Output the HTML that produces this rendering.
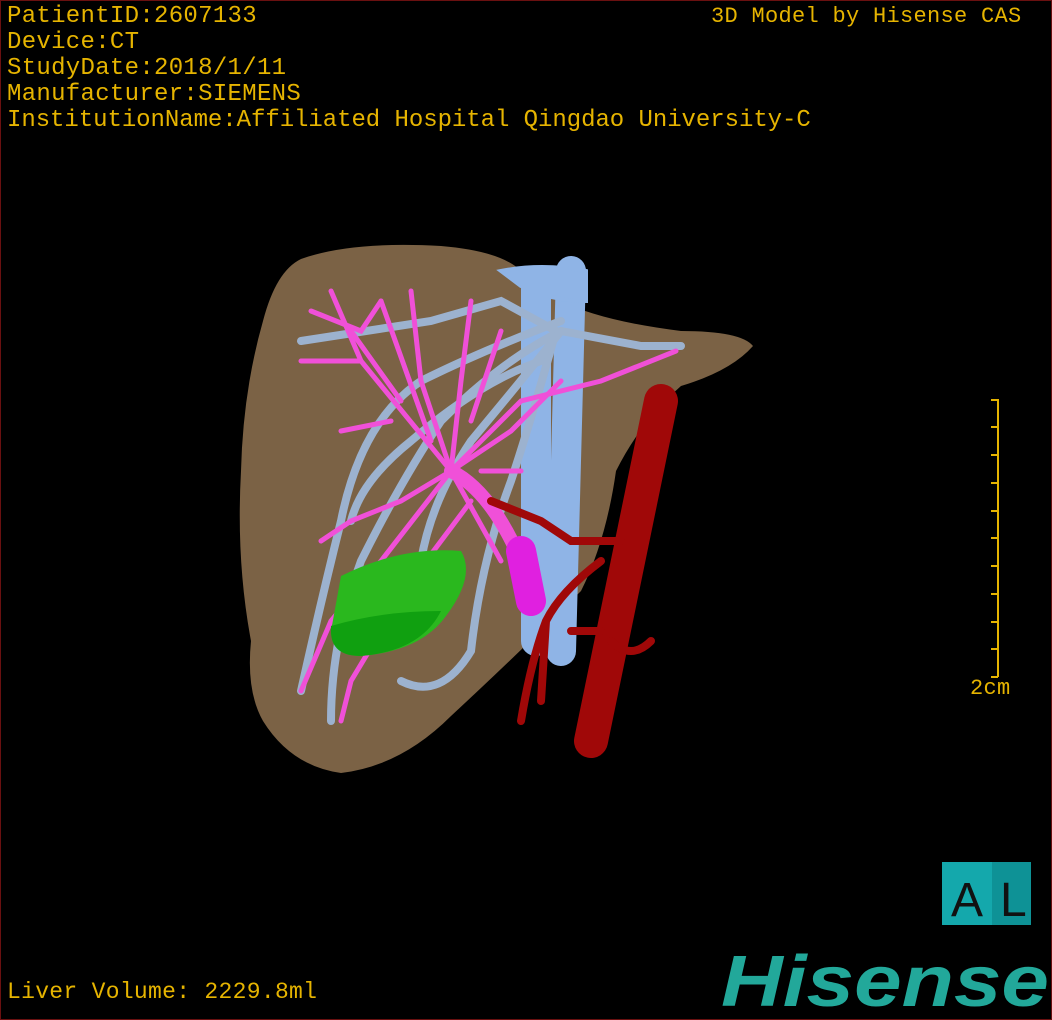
<!DOCTYPE html>
<html><head><meta charset="utf-8"><style>
html,body{margin:0;padding:0;background:#000}
#c{position:relative;width:1050px;height:1018px;border:1px solid #6a1010;overflow:hidden;background:#000}
.t{position:absolute;color:#e6b400;font-family:"Liberation Mono",monospace;font-size:24px;line-height:26px;white-space:pre;letter-spacing:0.3px}
svg{position:absolute;left:0;top:0}
</style></head><body><div id="c">
<svg width="1050" height="1018" viewBox="0 0 1050 1018">
<path d="M300 258 Q350 240 440 245 Q500 250 520 270 L560 300 Q600 320 680 330 Q740 330 752 345 Q730 370 680 385 Q640 420 615 470 Q605 540 580 590 Q520 650 450 715 Q400 765 340 772 Q290 765 262 720 Q245 690 250 640 Q235 560 240 470 Q242 390 262 320 Q275 270 300 258Z" fill="#7b6245"/>
<g fill="none" stroke-linecap="round">
<path d="M570 270 L560 650 M535 280 L535 640" stroke="#8fb4e6" stroke-width="30"/>
<path d="M500 270 Q540 262 585 270 L585 300 Q550 300 520 285Z" fill="#8fb4e6" stroke="#8fb4e6" stroke-width="4"/>
<g stroke="#9cb2cf" stroke-width="8">
<path d="M560 320 Q480 350 420 380 Q360 420 340 520 Q320 600 300 690"/>
<path d="M560 330 Q500 360 440 420 Q400 480 360 560 Q330 640 330 720"/>
<path d="M555 330 L500 300 L430 320 L300 340"/>
<path d="M555 330 Q530 420 510 480 Q480 560 470 650 Q440 700 400 680"/>
<path d="M560 330 L640 345 L680 345"/>
<path d="M560 330 Q520 380 470 440 Q430 500 420 560"/>
<path d="M540 360 Q480 380 410 440 Q360 480 350 520"/>
</g>
<g stroke="#f050d8" stroke-width="5">
<path d="M500 560 L450 470 L360 360 L330 290"/>
<path d="M450 470 L420 380 L410 290"/>
<path d="M450 470 L460 380 L470 300"/>
<path d="M450 470 L520 400 L600 380 L675 350"/>
<path d="M450 470 L400 500 L350 520 L320 540"/>
<path d="M450 470 L380 560 L330 620 L300 690"/>
<path d="M470 500 L410 580 L350 680 L340 720"/>
<path d="M360 360 L300 360 M390 420 L340 430 M380 300 L360 330 L310 310"/>
<path d="M450 470 L510 430 L540 400 L560 380"/>
<path d="M430 440 L380 300 M400 400 L350 330 M470 420 L500 330 M480 470 L520 470"/>
</g>
<path d="M450 470 Q490 490 520 560" stroke="#f050d8" stroke-width="14"/>
<path d="M520 550 L530 600" stroke="#e020e0" stroke-width="30"/>
<path d="M660 400 L590 740" stroke="#a00808" stroke-width="34"/>
<path d="M490 500 L540 520 L570 540 L620 540 M600 560 Q560 590 545 620 Q530 660 520 720 M545 620 L540 700 M570 630 L600 630 M610 640 Q630 660 650 640" stroke="#a00808" stroke-width="8"/>
</g>
<path d="M340 575 Q400 545 460 550 Q475 575 445 615 Q420 650 360 655 Q330 655 330 630Z" fill="#2ab81e"/>
<path d="M330 625 Q380 610 440 610 Q420 650 360 655 Q330 655 330 630Z" fill="#10a010"/>
<g stroke="#e6b400" stroke-width="2" fill="none">
<path d="M997 398 L997 676"/>
<path d="M990 399 L997 399 M990 676 L997 676 M990 426 L997 426 M990 454 L997 454 M990 482 L997 482 M990 510 L997 510 M990 537 L997 537 M990 565 L997 565 M990 593 L997 593 M990 621 L997 621 M990 648 L997 648"/>
</g>
<rect x="941" y="861" width="89" height="63" fill="#14a8ac"/>
<rect x="991" y="861" width="39" height="63" fill="#0e9296"/>
<text x="950" y="915" font-family="Liberation Sans,sans-serif" font-size="48" fill="#111">A</text>
<text x="999" y="915" font-family="Liberation Sans,sans-serif" font-size="48" fill="#111">L</text>
<text x="720" y="1005" font-family="Liberation Sans,sans-serif" font-weight="bold" font-style="italic" font-size="72" fill="#22a89a" textLength="328" lengthAdjust="spacingAndGlyphs">Hisense</text>
</svg>
<div class="t" style="left:6px;top:3px">PatientID:2607133
Device:CT
StudyDate:2018/1/11
Manufacturer:SIEMENS</div>
<div class="t" style="left:6px;top:107px;letter-spacing:-0.05px">InstitutionName:Affiliated Hospital Qingdao University-C</div>
<div class="t" style="left:710px;top:3px;font-size:22px">3D Model by Hisense CAS</div>
<div class="t" style="left:6px;top:978px;font-size:23px">Liver Volume: 2229.8ml</div>
<div class="t" style="left:969px;top:675px;font-size:22px">2cm</div>
</div></body></html>
